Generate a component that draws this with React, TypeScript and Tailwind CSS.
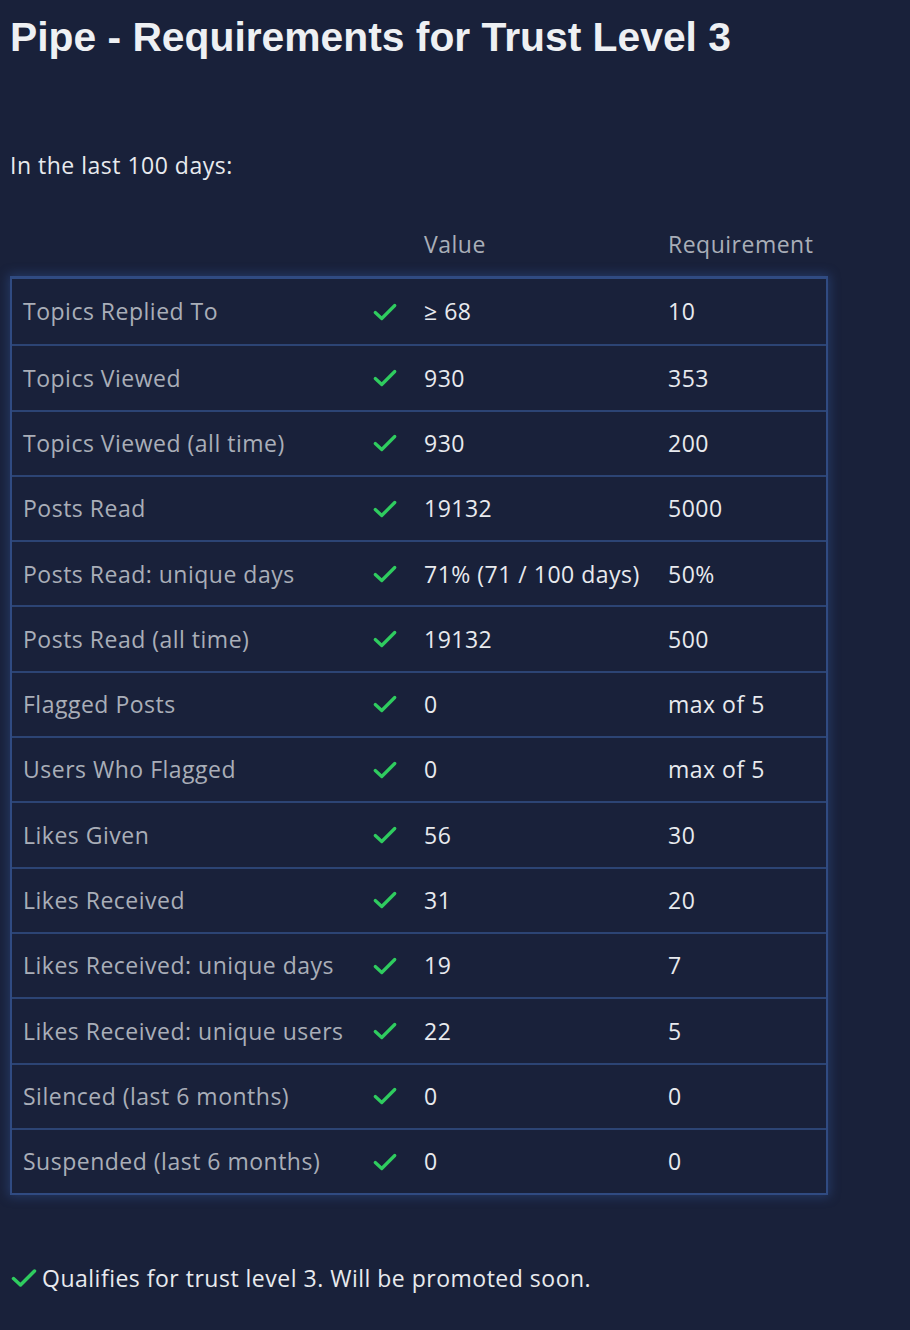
const rows: [string, string, string][] = [
  ["Topics Replied To", "≥ 68", "10"],
  ["Topics Viewed", "930", "353"],
  ["Topics Viewed (all time)", "930", "200"],
  ["Posts Read", "19132", "5000"],
  ["Posts Read: unique days", "71% (71 / 100 days)", "50%"],
  ["Posts Read (all time)", "19132", "500"],
  ["Flagged Posts", "0", "max of 5"],
  ["Users Who Flagged", "0", "max of 5"],
  ["Likes Given", "56", "30"],
  ["Likes Received", "31", "20"],
  ["Likes Received: unique days", "19", "7"],
  ["Likes Received: unique users", "22", "5"],
  ["Silenced (last 6 months)", "0", "0"],
  ["Suspended (last 6 months)", "0", "0"],
];

function Check({ className }: { className?: string }) {
  return (
    <svg viewBox="0 0 24 24" className={className} fill="none" stroke="#2fcc5f" strokeWidth={3} strokeLinecap="round" strokeLinejoin="round">
      <path d="M3 12.5l6 5.5L21 6" />
    </svg>
  );
}

export default function App() {
  return (
    <div className="min-h-screen w-full bg-[#19213a] pl-[10px] pt-[12px] pb-[30px] text-[#e8eaee] font-['Open_Sans','Noto_Sans',sans-serif] tracking-[0.5px]">
      <h1 className="font-['Liberation_Sans',Arial,sans-serif] text-[40.8px] font-bold leading-[50px] tracking-normal text-[#eef0f3]">
        Pipe - Requirements for Trust Level 3
      </h1>

      <p className="mt-[88px] text-[23px] leading-[30px]">In the last 100 days:</p>

      <div className="mt-[49px] w-[818px]">
        <div className="grid grid-cols-[350px_51px_244px_173px] pb-[17px] text-[23px] leading-[30px] text-[#a9aeb8]">
          <div />
          <div />
          <div className="pl-[13px]">Value</div>
          <div className="pl-[13px]">Requirement</div>
        </div>

        <div className="border-x-2 border-t-[3px] border-b-2 border-[#304b82] shadow-[0_0_10px_2px_rgba(52,84,150,0.45)]">
          {rows.map(([label, value, req], i) => (
            <div
              key={label}
              className={`grid h-[65.3px] grid-cols-[348px_51px_244px_171px] items-center text-[23px] ${
                i > 0 ? "border-t-2 border-[#2c4474]" : ""
              }`}
            >
              <div className="pl-[11px] text-[#a9aeb8]">{label}</div>
              <div className="pl-[12px]">
                <Check className="h-[26px] w-[26px]" />
              </div>
              <div className="pl-[13px]">{value}</div>
              <div className="pl-[13px]">{req}</div>
            </div>
          ))}
        </div>
      </div>

      <div className="mt-[68px] flex items-center gap-[4px] text-[23px] leading-[30px]">
        <Check className="h-[28px] w-[28px]" />
        <span>Qualifies for trust level 3. Will be promoted soon.</span>
      </div>
    </div>
  );
}
